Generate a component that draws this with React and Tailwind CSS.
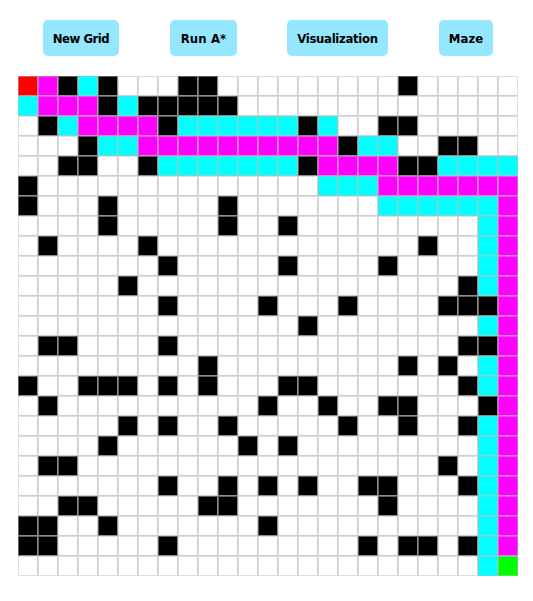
const ROWS = [
  'SP#V#...##.........#.....',
  'VPPP#V#####..............',
  '.#VPPPP#VVVVVV#V..##.....',
  '...#VVPPPPPPPPPP#VV..##..',
  '..##..#VVVVVVV#PPPP##VVVV',
  '#..............VVVPPPPPPP',
  '#...#.....#.......VVVVVVP',
  '....#.....#..#.........VP',
  '.#....#.............#..VP',
  '.......#.....#....#....VP',
  '.....#................#VP',
  '.......#....#...#....###P',
  '..............#........VP',
  '.##....#..............##P',
  '.........#.........#.#.VP',
  '#..###.#.#...##.......#VP',
  '.#..........#..#..##...#P',
  '.....#.#..#.....#..#..#VP',
  '....#......#.#.........VP',
  '.##..................#.VP',
  '.......#..#.#.#..##...#VP',
  '..##.....##.......#....VP',
  '##..#.......#..........VP',
  '##.....#.........#.##.#VP',
  '.......................VE',
];

const FILL = {
  S: 'bg-[#ff0000]',
  E: 'bg-[#00ff00]',
  P: 'bg-[#ff00ff]',
  V: 'bg-[#00ffff]',
  '#': 'bg-black',
  '.': 'bg-white',
};

const BUTTONS = [
  ['New Grid', 'w-[76px] tracking-[-0.5px]'],
  ['Run A*', 'w-[67px] ml-[51px] tracking-[0.1px]'],
  ['Visualization', 'w-[101px] ml-[50px] tracking-[-0.33px]'],
  ['Maze', 'w-[54px] ml-[51px]'],
];

export default function App() {
  return (
    <div className="h-[601px] w-[533px] overflow-hidden bg-white pt-5">
      <nav className="flex pl-[43px]">
        {BUTTONS.map(([label, box]) => (
          <button
            key={label}
            className={`${box} h-9 shrink-0 rounded-[5px] bg-[#95e6ff] pt-px text-center font-['DejaVu_Sans_Condensed','DejaVu_Sans',sans-serif] text-[13px] leading-[35px] font-bold whitespace-nowrap text-black`}
          >
            {label}
          </button>
        ))}
      </nav>
      <main className="mt-5 ml-[18px] grid w-[500px] auto-rows-[20px] grid-cols-[repeat(25,20px)]">
        {ROWS.flatMap((row, y) =>
          [...row].map((cell, x) => (
            <div
              key={`${x}-${y}`}
              className={`${FILL[cell]} border border-t-[#bebebe]/50 border-l-[#bebebe]/50 ${
                x === 24 ? 'border-r-[#bebebe]/50' : 'border-r-[#bebebe]/75'
              } ${y === 24 ? 'border-b-[#bebebe]/50' : 'border-b-[#bebebe]/75'}`}
            />
          ))
        )}
      </main>
    </div>
  );
}
